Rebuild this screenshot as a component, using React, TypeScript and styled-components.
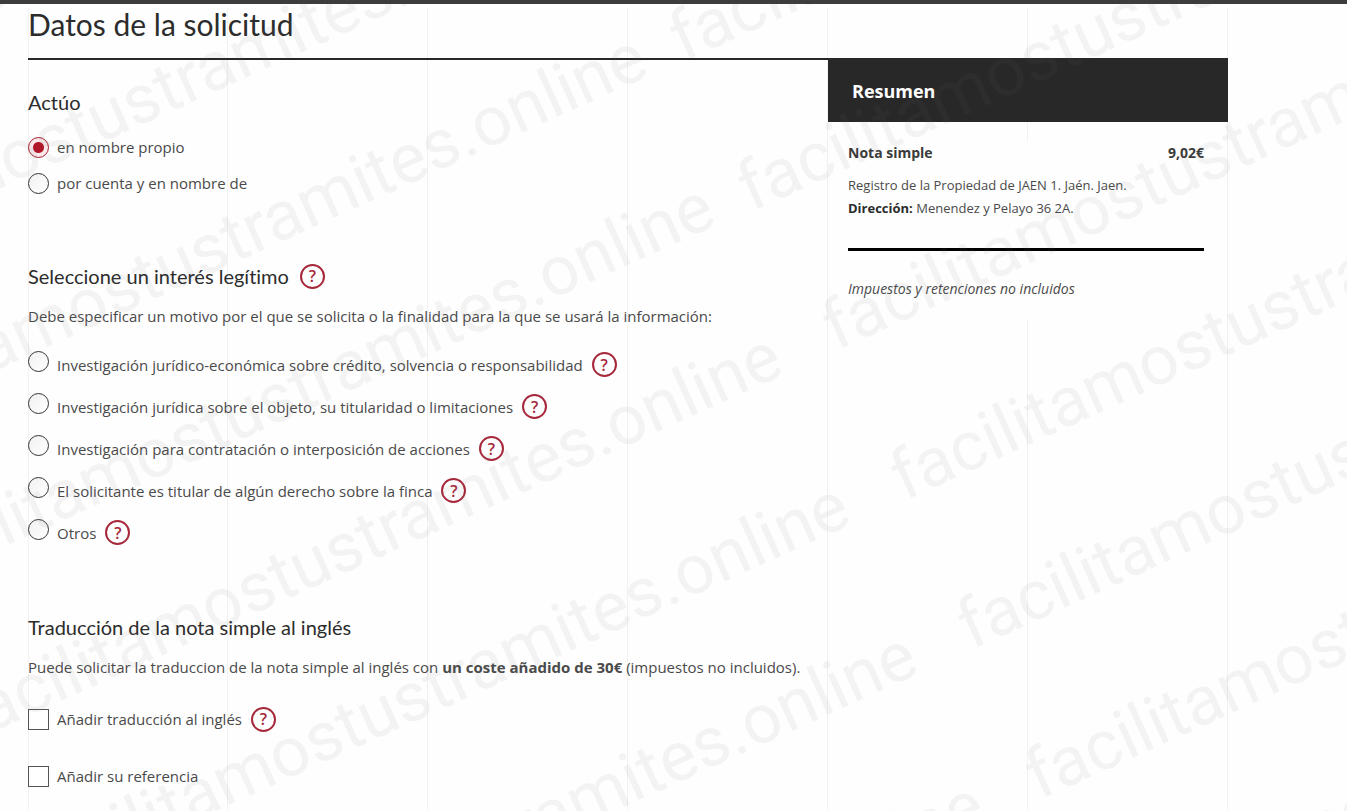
import React, { useState } from 'react';
import styled, { createGlobalStyle } from 'styled-components';

const GlobalStyle = createGlobalStyle`
  *, *::before, *::after { box-sizing: border-box; }
  body {
    margin: 0;
    background: #fefefe;
    color: #4a4a4a;
    font: 400 15px/24px "Open Sans", sans-serif;
  }
  h1, h2, p, fieldset { margin: 0; padding: 0; border: 0; }
`;

const Page = styled.div`
  position: relative;
  min-height: 100vh;
  overflow: hidden;
  border-top: 4px solid #3d3d3f;
  padding-left: 28px;
`;

const Columns = styled.div`
  display: grid;
  grid-template-columns: 2fr 1fr;
  max-width: 1200px;
  min-height: calc(100vh - 8px);
  margin-top: 4px;
  background:
    linear-gradient(#f2f2f2, #f2f2f2) left / 1px 100% no-repeat,
    repeating-linear-gradient(to right, transparent 0 calc(100% / 6 - 1px), #f2f2f2 calc(100% / 6 - 1px) calc(100% / 6));
`;

const Form = styled.form`
  padding-bottom: 20px;
`;

const Title = styled.h1`
  height: 52px;
  border-bottom: 2px solid #28282b;
  color: #2c2c2c;
  font: 400 30px/32px Lato, sans-serif;
`;

const Section = styled.fieldset<{ $top: number }>`
  display: flex;
  flex-direction: column;
  min-width: 0;
  padding-top: ${(p) => p.$top}px;
`;

const Heading = styled.h2`
  display: flex;
  align-items: center;
  gap: 11px;
  color: #2c2c2c;
  font: 400 20px/26px Lato, sans-serif;
  font-variant-ligatures: none;
`;

const Text = styled.p`
  margin-top: 15px;
`;

const Options = styled.div<{ $top: number; $gap: number }>`
  display: flex;
  flex-direction: column;
  gap: ${(p) => p.$gap}px;
  margin-top: ${(p) => p.$top}px;
`;

const Row = styled.div<{ $drop?: boolean }>`
  display: flex;
  align-items: ${(p) => (p.$drop ? 'flex-end' : 'center')};
  gap: 9px;
  min-height: 26px;
`;

const Choice = styled.label<{ $drop?: boolean }>`
  display: flex;
  align-items: ${(p) => (p.$drop ? 'flex-start' : 'center')};
  gap: 8px;
  cursor: pointer;
`;

const Label = styled.span<{ $drop?: boolean }>`
  padding-top: ${(p) => (p.$drop ? 2 : 0)}px;
`;

const Radio = styled.input.attrs({ type: 'radio' })`
  appearance: none;
  flex: none;
  width: 21px;
  height: 21px;
  margin: 0;
  border: 1px solid #333;
  border-radius: 50%;
  background: linear-gradient(135deg, #f0f0f0, #fff);
  &:checked {
    border-color: #a81c2c;
    background: radial-gradient(circle, #b0182a 5px, #fbe9ec 6px);
  }
`;

const Checkbox = styled.input.attrs({ type: 'checkbox' })`
  appearance: none;
  flex: none;
  width: 21px;
  height: 21px;
  margin: 0;
  border: 1px solid #555;
  background: #fff;
  &:checked { background: #b0182a; }
`;

const HelpButton = styled.button`
  display: flex;
  align-items: center;
  justify-content: center;
  flex: none;
  width: 25px;
  height: 25px;
  padding: 0;
  border: 2px solid #a6283a;
  border-radius: 50%;
  background: transparent;
  color: #a6283a;
  font: 600 16px/20px "Open Sans", sans-serif;
  cursor: pointer;
`;

const Summary = styled.aside`
  padding-top: 50px;
`;

const SummaryTitle = styled.h2`
  padding: 19px 24px 17px;
  background: #282828;
  color: #fff;
  font: 700 18px/28px "Open Sans", sans-serif;
`;

const SummaryBody = styled.div`
  margin: 20px 24px 0 20px;
  background: #fefefe;
  color: #4a4a4a;
  font-size: 13px;
  line-height: 23px;
  strong { color: #2c2c2c; }
`;

const Price = styled.div`
  display: flex;
  justify-content: space-between;
  margin-bottom: 10px;
  color: #3a3a3a;
  font-size: 14px;
  font-weight: 700;
  line-height: 22px;
`;

const Divider = styled.hr`
  height: 3px;
  margin: 28px 0 26px;
  border: 0;
  background: #000;
`;

const Note = styled.p`
  padding-bottom: 20px;
  font-size: 14px;
  font-style: italic;
`;

const WatermarkLayer = styled.svg`
  position: absolute;
  top: -4px;
  left: 0;
  width: 100%;
  height: 100%;
  overflow: visible;
  pointer-events: none;
  fill: rgba(120, 120, 120, 0.08);
  font: 400 69px Roboto, sans-serif;
`;

const WATERMARK = 'facilitamostustramites.online';
const LEFT_START = { x: -32, y: 743 };
const STEP = { x: 67.5, y: 149.5 };
const RIGHT_STARTS = [
  [683, 62],
  [751, 212],
  [836, 351],
  [904, 501],
  [971, 650],
  [1039, 800],
  [1106, 949],
];

const Watermark = () => (
  <WatermarkLayer aria-hidden="true">
    {[-5, -4, -3, -2, -1, 0, 1, 2, 3].map((n) => (
      <text key={n} transform={`translate(${LEFT_START.x + n * STEP.x} ${LEFT_START.y + n * STEP.y}) rotate(-24.3)`}>
        {WATERMARK}
      </text>
    ))}
    {RIGHT_STARTS.map(([x, y]) => (
      <text key={y} transform={`translate(${x} ${y}) rotate(-24.3)`}>
        {WATERMARK}
      </text>
    ))}
  </WatermarkLayer>
);

const Help = ({ about }: { about: string }) => (
  <HelpButton type="button" aria-label={`Ayuda: ${about}`}>?</HelpButton>
);

const INTERESTS = [
  'Investigación jurídico-económica sobre crédito, solvencia o responsabilidad',
  'Investigación jurídica sobre el objeto, su titularidad o limitaciones',
  'Investigación para contratación o interposición de acciones',
  'El solicitante es titular de algún derecho sobre la finca',
  'Otros',
];

const ACTING = ['en nombre propio', 'por cuenta y en nombre de'];

export default function App() {
  const [acting, setActing] = useState(ACTING[0]);
  return (
    <>
      <GlobalStyle />
      <Page>
        <Columns>
          <Form>
            <Title>Datos de la solicitud</Title>
            <Section $top={29}>
              <Heading>Actúo</Heading>
              <Options $top={19} $gap={10}>
                {ACTING.map((a) => (
                  <Row key={a}>
                    <Choice>
                      <Radio name="acting" checked={acting === a} onChange={() => setActing(a)} />
                      <Label>{a}</Label>
                    </Choice>
                  </Row>
                ))}
              </Options>
            </Section>
            <Section $top={67}>
              <Heading>
                Seleccione un interés legítimo
                <Help about="interés legítimo" />
              </Heading>
              <Text>Debe especificar un motivo por el que se solicita o la finalidad para la que se usará la información:</Text>
              <Options $top={23} $gap={16}>
                {INTERESTS.map((t) => (
                  <Row key={t} $drop>
                    <Choice $drop>
                      <Radio name="interest" />
                      <Label $drop>{t}</Label>
                    </Choice>
                    <Help about={t} />
                  </Row>
                ))}
              </Options>
            </Section>
            <Section $top={69}>
              <Heading>Traducción de la nota simple al inglés</Heading>
              <Text>
                Puede solicitar la traduccion de la nota simple al inglés con <strong>un coste añadido de 30€</strong> (impuestos no incluidos).
              </Text>
              <Options $top={27} $gap={31}>
                <Row>
                  <Choice>
                    <Checkbox />
                    <Label>Añadir traducción al inglés</Label>
                  </Choice>
                  <Help about="traducción al inglés" />
                </Row>
                <Row>
                  <Choice>
                    <Checkbox />
                    <Label>Añadir su referencia</Label>
                  </Choice>
                </Row>
              </Options>
            </Section>
          </Form>
          <Summary>
            <SummaryTitle>Resumen</SummaryTitle>
            <SummaryBody>
              <Price>
                <span>Nota simple</span>
                <span>9,02€</span>
              </Price>
              <p>Registro de la Propiedad de JAEN 1. Jaén. Jaen.</p>
              <p>
                <strong>Dirección:</strong> Menendez y Pelayo 36 2A.
              </p>
              <Divider />
              <Note>Impuestos y retenciones no incluidos</Note>
            </SummaryBody>
          </Summary>
        </Columns>
        <Watermark />
      </Page>
    </>
  );
}
